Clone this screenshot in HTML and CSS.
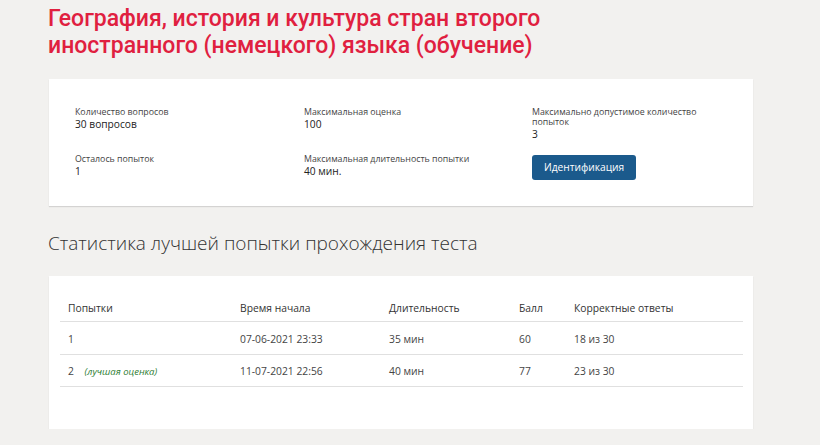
FILE: index.html
```html
<!DOCTYPE html>
<html lang="ru">
<head>
  <meta charset="UTF-8" />
  <title>Тест</title>
  <link rel="stylesheet" href="styles.css">
</head>
<body>
  <div class="page">
    <h1 class="title">География, история и культура стран второго иностранного (немецкого) языка (обучение)</h1>

    <div class="card info">
      <div class="info-grid">
        <div class="item">
          <div class="label">Количество вопросов</div>
          <div class="value">30 вопросов</div>
        </div>
        <div class="item">
          <div class="label">Максимальная оценка</div>
          <div class="value">100</div>
        </div>
        <div class="item">
          <div class="label">Максимально допустимое количество попыток</div>
          <div class="value">3</div>
        </div>
        <div class="item">
          <div class="label">Осталось попыток</div>
          <div class="value">1</div>
        </div>
        <div class="item">
          <div class="label">Максимальная длительность попытки</div>
          <div class="value">40 мин.</div>
        </div>
        <div class="item">
          <button class="btn">Идентификация</button>
        </div>
      </div>
    </div>

    <h2 class="subtitle">Статистика лучшей попытки прохождения теста</h2>

    <div class="card stats">
      <table class="table">
        <thead>
          <tr>
            <th class="c1">Попытки</th>
            <th class="c2">Время начала</th>
            <th class="c3">Длительность</th>
            <th class="c4">Балл</th>
            <th>Корректные ответы</th>
          </tr>
        </thead>
        <tbody>
          <tr>
            <td>1</td>
            <td>07-06-2021 23:33</td>
            <td>35 мин</td>
            <td>60</td>
            <td>18 из 30</td>
          </tr>
          <tr>
            <td>2 <span class="best">(лучшая оценка)</span></td>
            <td>11-07-2021 22:56</td>
            <td>40 мин</td>
            <td>77</td>
            <td>23 из 30</td>
          </tr>
        </tbody>
      </table>
    </div>
  </div>
</body>
</html>
```

FILE: styles.css
```css
body {
  margin: 0;
  background: #f2f1ef;
  font-family: "Open Sans", "Noto Sans", sans-serif;
  color: #333;
}

.page {
  width: 705px;
  padding: 5px 0 0 48px;
}

.title {
  font-family: Roboto, "Noto Sans", sans-serif;
  font-weight: 500;
  font-size: 23px;
  line-height: 27px;
  color: #e0203f;
  margin: 0 0 20px 0;
  padding-right: 200px;
}

.card {
  background: #fff;
  margin-left: 1px;
  box-shadow: 0 1px 1px rgba(0, 0, 0, 0.12);
}

.info {
  padding: 28px 26px 26px 26px;
}

.info-grid {
  display: grid;
  grid-template-columns: 229px 228px 170px;
  row-gap: 14px;
}

.label {
  font-size: 8.8px;
  line-height: 10px;
  color: #444;
}

.value {
  font-size: 10.2px;
  line-height: 11px;
  margin-top: 2px;
  color: #222;
}

.btn {
  background-color: #1b5a8c;
  border: none;
  color: #fff;
  font-family: "Open Sans", sans-serif;
  font-size: 10.2px;
  padding: 5px 12px 6px 12px;
  border-radius: 3px;
  cursor: pointer;
  margin-top: -2px;
}

.subtitle {
  font-family: "Open Sans", sans-serif;
  font-weight: 300;
  font-size: 19px;
  line-height: 26px;
  color: #333;
  margin: 24px 0 20px 0;
}

.stats {
  padding: 20px 10px 42px 11px;
}

.table {
  width: 100%;
  border-collapse: collapse;
  font-size: 10.3px;
  color: #444;
}

.table th {
  font-weight: normal;
  text-align: left;
  color: #333;
  padding: 5px 8px 6px 8px;
  border-bottom: 1px solid #e0e0e0;
}

.table td {
  padding: 9px 8px 8px 8px;
  border-bottom: 1px solid #e0e0e0;
}

.table tbody tr:first-child td {
  padding-top: 10px;
}

.c1 { width: 156px; }
.c2 { width: 133px; }
.c3 { width: 114px; }
.c4 { width: 39px; }

.best {
  font-style: italic;
  color: #2e7d32;
  font-size: 9.5px;
  margin-left: 8px;
}
```
